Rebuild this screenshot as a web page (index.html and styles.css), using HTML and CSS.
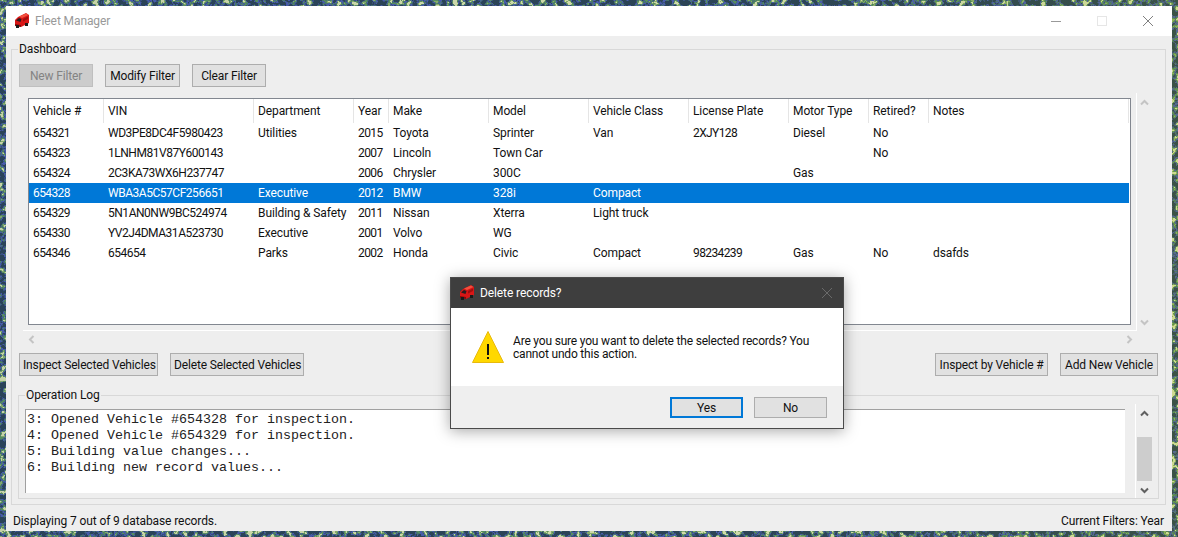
FILE: index.html
```html
<!DOCTYPE html>
<html lang="en">
<head>
    <meta charset="UTF-8">
    <meta name="viewport" content="width=device-width, initial-scale=1.0">
    <title>Fleet Manager</title>
    <link rel="stylesheet" href="styles.css">
</head>
<body>
    <svg class="defs" width="0" height="0">
        <symbol id="van" viewBox="0 0 16 16">
            <polygon points="4,4 12,0 15,2 15,10 7,14 1,12 1,7" fill="#d81616"/>
            <polygon points="5,3.5 12,0.5 14.5,2 8,5" fill="#f2503e"/>
            <polygon points="2,7.5 5,5 7.5,6 6.5,9" fill="#2a1c20"/>
            <polygon points="9,6 14,3.5 14,6 9,8.5" fill="#a00e0e"/>
            <polygon points="1,11 7,12 7,14 1,13" fill="#860a0a"/>
            <rect x="2" y="12" width="3" height="3" fill="#1a1a1a"/>
            <rect x="11" y="10" width="3" height="3" fill="#1a1a1a"/>
        </symbol>
        <symbol id="chev-up" viewBox="0 0 9 7">
            <path d="M1 5.5 L4.5 2 L8 5.5" fill="none" stroke="currentColor" stroke-width="2"/>
        </symbol>
        <symbol id="chev-down" viewBox="0 0 9 7">
            <path d="M1 1.5 L4.5 5 L8 1.5" fill="none" stroke="currentColor" stroke-width="2"/>
        </symbol>
        <symbol id="chev-left" viewBox="0 0 7 9">
            <path d="M5.5 1 L2 4.5 L5.5 8" fill="none" stroke="currentColor" stroke-width="2"/>
        </symbol>
        <symbol id="chev-right" viewBox="0 0 7 9">
            <path d="M1.5 1 L5 4.5 L1.5 8" fill="none" stroke="currentColor" stroke-width="2"/>
        </symbol>
    </svg>

    <div class="desktop">
        <div class="window">
            <div class="titlebar">
                <svg class="app-icon"><use href="#van"/></svg>
                <span class="title-text">Fleet Manager</span>
                <div class="win-controls">
                    <span class="win-btn"><svg width="10" height="10"><path d="M0 5.5H10" stroke="#999"/></svg></span>
                    <span class="win-btn"><svg width="10" height="10"><rect x="0.5" y="0.5" width="9" height="9" fill="none" stroke="#e6e6e6"/></svg></span>
                    <span class="win-btn"><svg width="10" height="10"><path d="M0 0L10 10M10 0L0 10" stroke="#808080"/></svg></span>
                </div>
            </div>

            <fieldset class="group dashboard">
                <legend>Dashboard</legend>
                <div class="button-row filters">
                    <button class="btn disabled">New Filter</button>
                    <button class="btn">Modify Filter</button>
                    <button class="btn">Clear Filter</button>
                </div>

                <div class="table-row">
                    <div class="table-frame">
                        <div class="listbox">
                            <table class="vehicles">
                                <colgroup>
                                    <col class="c75"><col class="c150"><col class="c100"><col class="c35"><col class="c100"><col class="c100"><col class="c100"><col class="c100"><col class="c80"><col class="c60"><col class="c200">
                                </colgroup>
                                <thead>
                                    <tr><th>Vehicle #</th><th>VIN</th><th>Department</th><th>Year</th><th>Make</th><th>Model</th><th>Vehicle Class</th><th>License Plate</th><th>Motor Type</th><th>Retired?</th><th>Notes</th></tr>
                                </thead>
                                <tbody>
                                    <tr><td>654321</td><td>WD3PE8DC4F5980423</td><td>Utilities</td><td>2015</td><td>Toyota</td><td>Sprinter</td><td>Van</td><td>2XJY128</td><td>Diesel</td><td>No</td><td></td></tr>
                                    <tr><td>654323</td><td>1LNHM81V87Y600143</td><td></td><td>2007</td><td>Lincoln</td><td>Town Car</td><td></td><td></td><td></td><td>No</td><td></td></tr>
                                    <tr><td>654324</td><td>2C3KA73WX6H237747</td><td></td><td>2006</td><td>Chrysler</td><td>300C</td><td></td><td></td><td>Gas</td><td></td><td></td></tr>
                                    <tr class="selected"><td>654328</td><td>WBA3A5C57CF256651</td><td>Executive</td><td>2012</td><td>BMW</td><td>328i</td><td>Compact</td><td></td><td></td><td></td><td></td></tr>
                                    <tr><td>654329</td><td>5N1AN0NW9BC524974</td><td>Building &amp; Safety</td><td>2011</td><td>Nissan</td><td>Xterra</td><td>Light truck</td><td></td><td></td><td></td><td></td></tr>
                                    <tr><td>654330</td><td>YV2J4DMA31A523730</td><td>Executive</td><td>2001</td><td>Volvo</td><td>WG</td><td></td><td></td><td></td><td></td><td></td></tr>
                                    <tr><td>654346</td><td>654654</td><td>Parks</td><td>2002</td><td>Honda</td><td>Civic</td><td>Compact</td><td>98234239</td><td>Gas</td><td>No</td><td>dsafds</td></tr>
                                </tbody>
                            </table>
                        </div>
                    </div>
                    <div class="vscroll idle">
                        <svg class="chev-v"><use href="#chev-up"/></svg>
                        <svg class="chev-v"><use href="#chev-down"/></svg>
                    </div>
                </div>
                <div class="hscroll idle">
                    <svg class="chev-h"><use href="#chev-left"/></svg>
                    <svg class="chev-h"><use href="#chev-right"/></svg>
                </div>

                <div class="button-row actions">
                    <div class="button-group">
                        <button class="btn">Inspect Selected Vehicles</button>
                        <button class="btn">Delete Selected Vehicles</button>
                    </div>
                    <div class="button-group">
                        <button class="btn">Inspect by Vehicle #</button>
                        <button class="btn">Add New Vehicle</button>
                    </div>
                </div>

                <fieldset class="group oplog">
                    <legend>Operation Log</legend>
                    <div class="log-row">
                        <div class="log-text">3: Opened Vehicle #654328 for inspection.
4: Opened Vehicle #654329 for inspection.
5: Building value changes...
6: Building new record values...</div>
                        <div class="log-scroll">
                            <svg class="chev-v"><use href="#chev-up"/></svg>
                            <div class="log-track"><div class="log-thumb"></div></div>
                            <svg class="chev-v"><use href="#chev-down"/></svg>
                        </div>
                    </div>
                </fieldset>
            </fieldset>

            <div class="statusbar">
                <span>Displaying 7 out of 9 database records.</span>
                <span>Current Filters: Year</span>
            </div>
        </div>

        <div class="dialog">
            <div class="dialog-title">
                <svg class="app-icon"><use href="#van"/></svg>
                <span>Delete records?</span>
                <svg class="dialog-close" width="10" height="10"><path d="M0 0L10 10M10 0L0 10" stroke="#6a6a6a"/></svg>
            </div>
            <div class="dialog-body">
                <svg class="warn-icon" viewBox="0 0 32 32">
                    <polygon points="16,0.5 31.5,31.5 0.5,31.5" fill="#ffd800" stroke="#e8b90c"/>
                    <rect x="15" y="13" width="2" height="11" fill="#111"/>
                    <rect x="15" y="26" width="2" height="2" fill="#111"/>
                </svg>
                <p class="dialog-msg">Are you sure you want to delete the selected records? You cannot undo this action.</p>
            </div>
            <div class="dialog-footer">
                <button class="btn dlg-btn default">Yes</button>
                <button class="btn dlg-btn">No</button>
            </div>
        </div>
    </div>
</body>
</html>
```

FILE: styles.css
```css
* {
    box-sizing: border-box;
}

html, body {
    margin: 0;
    height: 537px;
    overflow: hidden;
}

body {
    font-family: Roboto, 'Open Sans', sans-serif;
    font-size: 12px;
    letter-spacing: -0.1px;
    color: #111;
}

.defs {
    position: absolute;
}

/* wallpaper: mottled noise, bluer to the left, yellower to the right */
.desktop {
    position: relative;
    height: 537px;
    padding: 6px;
    background-color: #16261c;
    background-image: url("data:image/svg+xml,%3Csvg xmlns='http://www.w3.org/2000/svg' width='1178' height='537'%3E%3Cdefs%3E%3Cfilter id='n' x='0' y='0' width='100%25' height='100%25'%3E%3CfeTurbulence type='fractalNoise' baseFrequency='0.17' numOctaves='3' seed='7'/%3E%3CfeColorMatrix values='3.2 0 0 0 -1.3 3.2 0 0 0 -1.3 3.2 0 0 0 -1.3 0 0 0 0 1'/%3E%3CfeComponentTransfer%3E%3CfeFuncR type='discrete' tableValues='0.03 0.05 0.08 0.08 0.12 0.3 0.78'/%3E%3CfeFuncG type='discrete' tableValues='0.06 0.09 0.12 0.2 0.32 0.48 0.84'/%3E%3CfeFuncB type='discrete' tableValues='0.08 0.2 0.42 0.14 0.1 0.14 0.42'/%3E%3C/feComponentTransfer%3E%3C/filter%3E%3ClinearGradient id='g'%3E%3Cstop offset='0' stop-color='%23143a90' stop-opacity='.15'/%3E%3Cstop offset='.6' stop-color='%23143a90' stop-opacity='.1'/%3E%3Cstop offset='1' stop-color='%23708a20' stop-opacity='.2'/%3E%3C/linearGradient%3E%3C/defs%3E%3Crect width='1178' height='537' filter='url(%23n)'/%3E%3Crect width='1178' height='537' fill='url(%23g)'/%3E%3C/svg%3E");
}

.window {
    display: flex;
    flex-direction: column;
    width: 1166px;
    height: 525px;
    background-color: #eeeeee;
}

/* title bar */
.titlebar {
    display: flex;
    align-items: center;
    flex: none;
    height: 30px;
    padding-left: 8px;
    background-color: #ffffff;
}

.app-icon {
    flex: none;
    width: 16px;
    height: 16px;
}

.title-text {
    margin-left: 5px;
    color: #999999;
}

.win-controls {
    display: flex;
    margin-left: auto;
    margin-right: 1px;
}

.win-btn {
    display: flex;
    align-items: center;
    justify-content: center;
    width: 46px;
    height: 30px;
}

/* group boxes */
.group {
    min-width: 0;
    margin: 0;
    border: 1px solid #d8d8d8;
}

.group legend {
    height: 16px;
    padding: 0 1px;
    margin-left: -1px;
    line-height: 16px;
    color: #111;
}

.dashboard {
    flex: none;
    height: 464px;
    margin: 5px 6px 0 5px;
    padding: 0 7px;
}

.button-row {
    display: flex;
}

.filters {
    gap: 12px;
    margin-top: 7px;
}

.actions {
    justify-content: space-between;
    margin-top: 6px;
}

.button-group {
    display: flex;
    gap: 12px;
}

.btn {
    height: 23px;
    padding: 0 3px;
    border: 1px solid #adadad;
    background-color: #e1e1e1;
    font-family: inherit;
    font-size: 12px;
    letter-spacing: -0.15px;
    color: #111;
    white-space: nowrap;
}

.filters .btn {
    width: 74px;
}

.filters .btn:nth-child(2) {
    width: 75px;
}

.actions .button-group:first-child .btn:first-child {
    width: 139px;
}

.actions .button-group:first-child .btn:last-child {
    width: 134px;
}

.actions .button-group:last-child .btn:first-child {
    width: 113px;
}

.actions .button-group:last-child .btn:last-child {
    width: 98px;
}

.btn.disabled {
    background-color: #cccccc;
    border-color: #bfbfbf;
    color: #838383;
}

/* vehicle table */
.table-row {
    display: flex;
    margin-top: 6px;
    margin-left: 4px;
}

.table-frame {
    flex: none;
    width: 1114px;
    height: 238px;
    padding: 5px 5px 5px 5px;
    border-right: 1px solid #ffffff;
    border-bottom: 1px solid #ffffff;
}

.listbox {
    height: 227px;
    border: 1px solid #828790;
    background-color: #ffffff;
}

.vehicles {
    width: 1100px;
    table-layout: fixed;
    border-collapse: separate;
    border-spacing: 0;
}

.c35 { width: 35px; }
.c60 { width: 60px; }
.c75 { width: 75px; }
.c80 { width: 80px; }
.c100 { width: 100px; }
.c150 { width: 150px; }
.c200 { width: 200px; }

.vehicles th,
.vehicles td {
    padding: 0 0 0 4px;
    overflow: hidden;
    font-weight: normal;
    text-align: left;
    white-space: nowrap;
}

.vehicles th {
    height: 24px;
    border-right: 1px solid #e5e5e5;
}

.vehicles td {
    height: 20px;
}

/* id, year and plate columns are mostly digits, which run wide in this font */
.vehicles td:nth-child(1),
.vehicles td:nth-child(4),
.vehicles td:nth-child(8) {
    letter-spacing: -0.6px;
}

.vehicles td:nth-child(2) {
    letter-spacing: -0.47px;
}

.vehicles .selected {
    background-color: #0078d7;
    color: #ffffff;
}

.idle {
    color: #c4c4c4;
}

.vscroll {
    display: flex;
    flex-direction: column;
    justify-content: space-between;
    align-items: center;
    width: 15px;
    height: 238px;
    padding: 6px 0 5px;
}

.chev-v {
    display: block;
    width: 9px;
    height: 7px;
}

.chev-h {
    display: block;
    width: 7px;
    height: 9px;
}

.hscroll {
    display: flex;
    align-items: center;
    justify-content: space-between;
    width: 1105px;
    height: 16px;
    margin-left: 9px;
}

/* operation log */
.oplog {
    height: 112px;
    margin: 11px -1px 0;
    padding: 0 6px;
}

.oplog legend {
    margin-left: 0;
}

.log-row {
    display: flex;
    height: 94px;
    margin-top: 1px;
}

.log-text {
    width: 1100px;
    height: 84px;
    margin-top: 5px;
    padding: 2px 0 0 1px;
    border-top: 1px solid #a0a0a0;
    border-left: 1px solid #a0a0a0;
    background-color: #ffffff;
    font-family: 'Liberation Mono', monospace;
    font-size: 13.33px;
    letter-spacing: 0;
    line-height: 16px;
    white-space: pre;
    color: #222;
}

.log-scroll {
    display: flex;
    flex-direction: column;
    align-items: center;
    width: 17px;
    margin-left: 10px;
    padding: 6px 0 4px;
    border-left: 1px solid #ffffff;
    color: #606060;
}

.log-track {
    flex: 1;
    width: 15px;
    padding-top: 20px;
}

.log-thumb {
    height: 44px;
    background-color: #cdcdcd;
}

/* status bar */
.statusbar {
    display: flex;
    align-items: center;
    justify-content: space-between;
    flex: 1;
    padding: 6px 8px 0 7px;
}

/* confirm dialog */
.dialog {
    position: absolute;
    top: 277px;
    left: 450px;
    display: flex;
    flex-direction: column;
    width: 394px;
    height: 152px;
    border: 1px solid #4a4a4a;
    background-color: #efefef;
    box-shadow: 0 2px 14px rgba(0, 0, 0, 0.35);
}

.dialog-title {
    display: flex;
    align-items: center;
    flex: none;
    height: 30px;
    padding-left: 8px;
    background-color: #3e3e3e;
    color: #ffffff;
}

.dialog-title span {
    margin-left: 5px;
}

.dialog-close {
    margin-left: auto;
    margin-right: 11px;
}

.dialog-body {
    display: flex;
    align-items: center;
    flex: none;
    height: 78px;
    padding-left: 21px;
    background-color: #ffffff;
}

.warn-icon {
    flex: none;
    width: 32px;
    height: 32px;
}

.dialog-msg {
    width: 310px;
    margin: 2px 0 0 9px;
    letter-spacing: -0.19px;
    line-height: 13px;
}

.dialog-footer {
    display: flex;
    justify-content: flex-end;
    gap: 11px;
    padding: 11px 16px 0 0;
}

.dlg-btn {
    width: 73px;
    height: 21px;
}

.dlg-btn.default {
    border: 2px solid #0078d7;
}
```
